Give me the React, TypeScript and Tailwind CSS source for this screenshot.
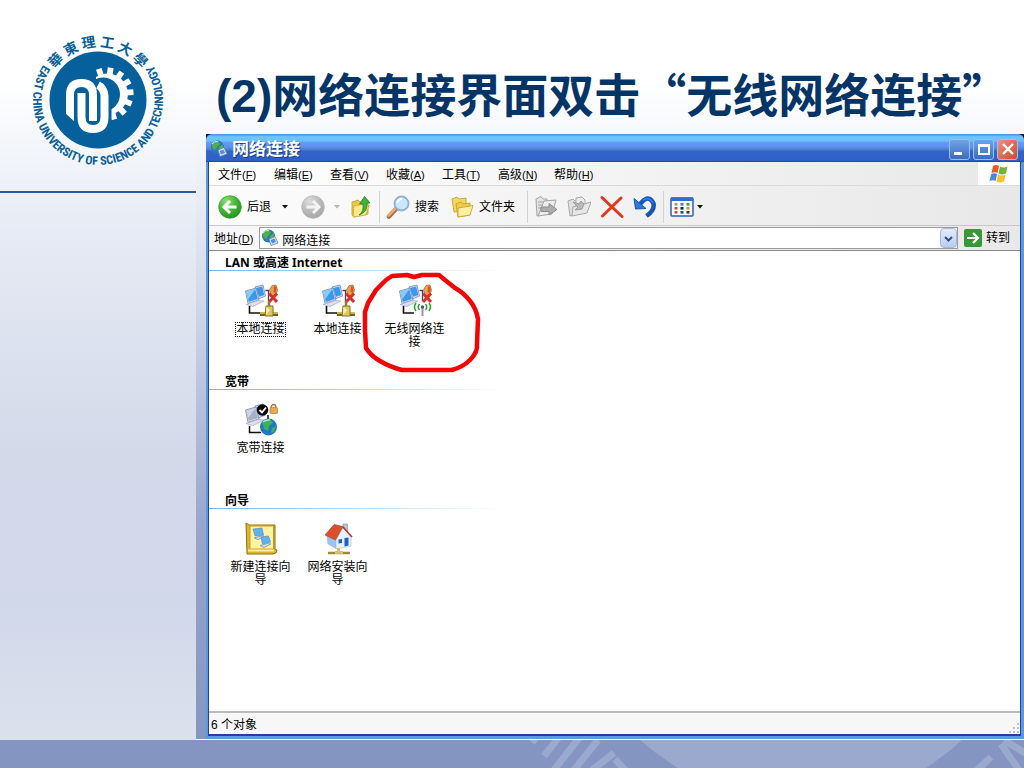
import type { ReactNode } from 'react';

const UI_FONT = "font-['Liberation_Sans','Noto_Sans_CJK_SC',sans-serif]";

function UniversityLogo() {
  const teeth = [-108, -82, -56, -30, -4, 22, 48, 74];
  return (
    <svg viewBox="0 0 160 160" className="w-40 h-40 block" role="img" aria-label="華東理工大學">
      <defs>
        <path id="ring-top" d="M 28.2 61.9 A 53 53 0 0 1 127.8 61.9" />
        <path id="ring-bottom" d="M 28.2 38.2 A 65 65 0 1 0 127.8 38.2" />
      </defs>
      <circle cx="78" cy="80" r="48.5" fill="#05609c" />
      <path d="M76 57 A 20.500 20.500 0 1 1 92 94 L 90 90 A 17 17 0 0 0 76 59 Z" fill="#fff" />
      <g stroke="#fff" fill="none">
        {teeth.map((a) => (
          <path key={a} d="M18.500 0 H26.500" strokeWidth="5.800" transform={`translate(87 74) rotate(${a})`} />
        ))}
      </g>
      <path d="M50 102 V74 Q50 63 61.500 63 Q73 63 73 74 V98 H85 V76" fill="none" stroke="#05609c" strokeWidth="13" />
      <g fill="none" stroke="#fff" strokeWidth="8">
        <path d="M50 101 V75 Q50 63 61.500 63 Q73 63 73 75 V101" />
        <path d="M61.500 73 V97 Q61.500 109 73 109 Q84.500 109 84.500 97 V76 Q84 68 78 65" />
      </g>
      <path d="M44 92 L56 103 H44 Z" fill="#05609c" />
      <g fill="#0a5f98" className="font-['Liberation_Sans_Narrow','Roboto_Condensed','Liberation_Sans','Noto_Sans_CJK_TC',sans-serif]">
        <text fontSize="14" fontWeight="700" textAnchor="middle">
          <textPath href="#ring-top" startOffset="50%">華 東 理 工 大 學</textPath>
        </text>
        <text fontSize="12" fontWeight="700" textAnchor="middle">
          <textPath href="#ring-bottom" startOffset="50%">EAST CHINA UNIVERSITY OF SCIENCE AND TECHNOLOGY</textPath>
        </text>
      </g>
    </svg>
  );
}

function GlobeIcon({ className }: { className: string }) {
  return (
    <svg viewBox="0 0 18 18" className={className} aria-hidden="true">
      <circle cx="7.500" cy="7" r="6.500" fill="#2c78c4" />
      <path d="M2 5 Q4 1 8 1 L10 4 L7 7 L5 10 Q2 9 2 5 Z M9 7 L13 4 L13 10 L10 12 Z" fill="#52b13c" />
      <path d="M2 4 Q4 1 8 1.500" stroke="#b8f0ff" fill="none" />
      <path d="M8 10 L14 7.500 L17 14 L10 16.500 Z" fill="#dce6f2" stroke="#6b8198" strokeWidth=".8" />
      <path d="M9.500 11 L13.400 9.400 L15 13 L11 14.500 Z" fill="#4d92d8" />
    </svg>
  );
}

function CircleArrow({ disabled }: { disabled?: boolean }) {
  return (
    <svg viewBox="0 0 24 24" className="w-6 h-6" aria-hidden="true">
      <defs>
        <radialGradient id={disabled ? 'arrow-off' : 'arrow-on'} cx=".35" cy=".25" r=".85">
          <stop offset="0" stopColor={disabled ? '#dedede' : '#8fe07a'} />
          <stop offset=".5" stopColor={disabled ? '#bcbcbc' : '#44b534'} />
          <stop offset="1" stopColor={disabled ? '#a2a2a2' : '#238a1c'} />
        </radialGradient>
      </defs>
      <circle cx="12" cy="12" r="11.300" fill={disabled ? 'url(#arrow-off)' : 'url(#arrow-on)'} stroke={disabled ? '#b4b4b4' : '#3a9a32'} strokeWidth=".7" />
      <path
        d={disabled ? 'M5.500 12 H17 M12 6 L18 12 L12 18' : 'M18.500 12 H7 M12 6 L6 12 L12 18'}
        fill="none"
        stroke={disabled ? '#f4f4f4' : '#fff'}
        strokeWidth="3"
      />
    </svg>
  );
}

function Caret({ color = '#111' }: { color?: string }) {
  return (
    <svg viewBox="0 0 8 8" className="w-2 h-2" aria-hidden="true">
      <path d="M1 2 H7 L4 5.500 Z" fill={color} />
    </svg>
  );
}

function UpFolderIcon() {
  return (
    <svg viewBox="0 0 24 24" className="w-6 h-6" aria-hidden="true">
      <path d="M3 7 L9 5 L11 7 L19 5 V19 L5 22 L3 20 Z" fill="#e9c843" stroke="#c39b24" strokeWidth=".8" />
      <path d="M5 11 L15 9 L20 10 L17 20 L4 22 Z" fill="#fbe98b" stroke="#cda934" strokeWidth=".8" />
      <path d="M10 20 Q15 17 14 9 H10.500 L15.500 1.500 L21 8 H18 Q19 17 10 20 Z" fill="#3fb33a" stroke="#1e8524" strokeWidth=".8" />
    </svg>
  );
}

function SearchIcon() {
  return (
    <svg viewBox="0 0 24 24" className="w-6 h-6" aria-hidden="true">
      <path d="M10 14 L3 21.500" stroke="#a2714a" strokeWidth="4.500" strokeLinecap="round" />
      <path d="M9 14 L2.500 20.500" stroke="#f0a868" strokeWidth="2.500" strokeLinecap="round" />
      <circle cx="15.500" cy="8.500" r="7" fill="#c9e8fb" stroke="#8fb0d6" strokeWidth="1.800" />
      <path d="M11 8 Q12 4 16 3.500" stroke="#fff" strokeWidth="2" fill="none" />
    </svg>
  );
}

function FoldersIcon() {
  return (
    <svg viewBox="0 0 24 24" className="w-6 h-6" aria-hidden="true">
      <g stroke="#c9a12c" strokeWidth=".9">
        <path d="M1 4 L6 2 L8 4 L15 3 V15 L3 17 Z" fill="#f3d75c" />
        <path d="M5 9 L10 7 L12 9 L19 8 V20 L7 22 Z" fill="#efcd4a" />
        <path d="M7 13 L22 10.500 L19 20 L7 22 Z" fill="#fdf0a0" />
      </g>
    </svg>
  );
}

function MoveIcon({ copy }: { copy?: boolean }) {
  return (
    <svg viewBox="0 0 24 24" className="w-6 h-6" aria-hidden="true">
      {copy ? (
        <g stroke="#a9a9a9" fill="#e0e0e0">
          <path d="M1 6 L6 4 L8 6 L10 6 V19 L3 21 Z" />
          <path d="M9 3 L15 2 L18 5 V15 L9 16 Z" fill="#ececec" />
          <path d="M6 12 L24 7 L20 18 L5 21 Z" fill="#e6e6e6" />
          <path d="M6 7 L12 9 L14 6 L17 9 L15 14 L8 15 L11 12 Z" fill="#b9b9b9" stroke="#9c9c9c" />
        </g>
      ) : (
        <g stroke="#a3a3a3" fill="#e4e4e4">
          <path d="M2 4 L7 1.500 L9 4 H13 V18 L3 21 Z" />
          <path d="M10 6 L22 5 L18 19 L4 21 Z" fill="#ededed" />
          <path d="M4 7 H9 M4 10 H9 M4 13 H7" />
          <path d="M7 12 H15 V8.500 L23 14.500 L15 20 V16.500 H7 Z" fill="#acacac" stroke="#8d8d8d" />
        </g>
      )}
    </svg>
  );
}

function DeleteIcon() {
  return (
    <svg viewBox="0 0 24 24" className="w-6 h-6" aria-hidden="true">
      <path d="M2 2.500 L22 21.500 M21 3 L2.500 21" stroke="#e1371c" strokeWidth="3" strokeLinecap="round" fill="none" />
    </svg>
  );
}

function UndoIcon() {
  return (
    <svg viewBox="0 0 24 24" className="w-6 h-6" aria-hidden="true">
      <path d="M13.500 21 Q22 15 20.500 8.500 Q17 1 11 5 L6 10" fill="none" stroke="#1656b8" strokeWidth="4.500" />
      <path d="M1 3.500 L2.500 14 L13 13.500 Z" fill="#2f78d6" stroke="#1656b8" />
      <path d="M10 5 Q17 1.500 20 8" fill="none" stroke="#3c84e0" strokeWidth="1.500" />
    </svg>
  );
}

function ViewsIcon() {
  const dots: [number, number, string][] = [
    [5, 8, '#999'], [11, 8, '#4a76d0'], [17, 8, '#35a035'],
    [5, 12, '#d64a30'], [11, 12, '#222'], [17, 12, '#e09a1c'],
    [5, 16, '#d64a30'], [11, 16, '#174ba8'], [17, 16, '#333'],
  ];
  return (
    <svg viewBox="0 0 24 24" className="w-6 h-6" aria-hidden="true">
      <rect x="1" y="3" width="22" height="18" rx="1" fill="#fff" stroke="#2a5fb0" strokeWidth="1.500" />
      <rect x="1" y="2.500" width="22" height="3.500" fill="#2f6fd0" />
      {dots.map(([x, y, c]) => (
        <rect key={`${x}-${y}`} x={x - 0.5} y={y} width="3" height="2.600" fill={c} />
      ))}
    </svg>
  );
}

function WindowsFlag() {
  return (
    <svg viewBox="0 0 20 20" className="w-5 h-5" aria-hidden="true">
      <path d="M4 2 Q7 0 10 2 L8.500 9 Q6 7.500 2.500 9 Z" fill="#ea5b2c" />
      <path d="M11 2.500 Q14 4.500 18.500 2.500 L17 9.500 Q13 11.500 9.500 9.500 Z" fill="#6fb43c" />
      <path d="M2.200 10 Q5.500 8.500 8.200 10 L6.500 17 Q4 15.500 .5 17 Z" fill="#4a86dc" />
      <path d="M9.200 10.500 Q13 12.500 16.700 10.500 L15 17.500 Q11 19.500 7.500 17.500 Z" fill="#f5c02e" />
    </svg>
  );
}

function Monitors({ gray }: { gray?: boolean }) {
  const screen = gray ? '#a9b0c6' : '#3a98ee';
  const light = gray ? '#ced2e4' : '#86cdfb';
  return (
    <g>
      <path d="M11 3 L19 1 L21.500 12 L14 15 Z" fill="#d5e0f2" stroke="#6f87ae" strokeWidth=".8" />
      <path d="M12 4 L18.200 2.400 L20.300 11 L15 12.800 Z" fill={screen} />
      <path d="M1.500 7 L12 4 L15 16 L4 19.500 Z" fill="#d5e0f2" stroke="#6f87ae" strokeWidth=".8" />
      <path d="M2.600 7.800 L11.300 5.300 L13.800 15 L4.700 17.900 Z" fill={screen} />
      <path d="M2.600 7.800 L11.300 5.300 L4.300 15 Z" fill={light} />
      <path d="M2 20.500 L14 16.500 L20 17 L9 22.500 Z" fill="#dfdff0" stroke="#a3a8c2" strokeWidth=".7" />
    </g>
  );
}

function PlugWithCross() {
  return (
    <g>
      <path d="M21.500 6.500 H24.500 V17" stroke="#4b3f6e" strokeWidth="1.300" fill="none" />
      <path d="M25.500 6 L28 1.500 L32 1 L33.500 6 L32 11 L27 12 Z" fill="#e9a254" stroke="#a9601c" strokeWidth=".7" />
      <path d="M30 2 L32.500 3 L32 9 L29.500 8 Z" fill="#d2562c" />
      <path d="M25 9.500 L33 18 M33 9.500 L25 18" stroke="#d8302a" strokeWidth="3" />
    </g>
  );
}

function LanIcon() {
  return (
    <svg viewBox="0 0 34 34" className="w-[34px] h-[34px]" aria-hidden="true">
      <Monitors />
      <PlugWithCross />
      <path d="M5.500 22 V29 H18" stroke="#111" strokeWidth="1.600" fill="none" />
      <path d="M16 30 H34" stroke="#6d6226" strokeWidth="4" />
      <path d="M16 29 H34" stroke="#d9c050" strokeWidth="1.800" />
      <path d="M22 22 H29 V32 H21 Z" fill="#dfc95e" stroke="#80702a" />
      <path d="M22.500 23 L26 26 L22 31 Z" fill="#faf0b4" />
      <path d="M25 17 V22" stroke="#8a7a35" strokeWidth="2.500" />
    </svg>
  );
}

function WirelessIcon() {
  return (
    <svg viewBox="0 0 34 34" className="w-[34px] h-[34px]" aria-hidden="true">
      <Monitors />
      <PlugWithCross />
      <path d="M5.500 22 V29 H16" stroke="#111" strokeWidth="1.600" fill="none" />
      <path d="M24.500 23 V32" stroke="#a58cc0" strokeWidth="2" />
      <circle cx="24.500" cy="23" r="1.700" fill="#5c4b82" />
      <path d="M21.500 20 Q19 23 21.500 26 M18 19 Q15 23 18 27 M27.500 20 Q30 23 27.500 26 M31 19 Q34 23 31 27" stroke="#29a32b" strokeWidth="1.500" fill="none" />
    </svg>
  );
}

function BroadbandIcon() {
  return (
    <svg viewBox="0 0 34 34" className="w-[34px] h-[34px]" aria-hidden="true">
      <Monitors gray />
      <path d="M5.500 23 V29.500 H17 M24 12 V17" stroke="#111" strokeWidth="1.500" fill="none" />
      <path d="M27 5 Q27 1.500 30 1.500 Q32 1.500 32 5" stroke="#9c7548" fill="none" strokeWidth="1.300" />
      <rect x="26" y="4.500" width="7.500" height="6" rx="1" fill="#e7a850" stroke="#b67a32" strokeWidth=".7" />
      <circle cx="18.500" cy="7" r="5.800" fill="#0b0b0b" />
      <path d="M15.500 7 L18 9.500 L22 4.500" stroke="#fff" strokeWidth="1.800" fill="none" />
      <circle cx="24.500" cy="24" r="8.500" fill="#1e78c4" />
      <path d="M18 19 Q22 15 27 17 L29 20 L25 23 L24 28 L20 26 Z M28 25 L32 23 L30 29 L27 30 Z" fill="#3fb055" />
      <path d="M19 19 Q22 16.500 26 17" stroke="#a5e8ef" strokeWidth="1.500" fill="none" />
    </svg>
  );
}

function NewConnectionIcon() {
  return (
    <svg viewBox="0 0 34 34" className="w-[34px] h-[34px]" aria-hidden="true">
      <path d="M2 1 L5 3 H31 V27 L33 28 Q33 32 29 32 H3 Z" fill="#dbb52c" stroke="#8e6f16" />
      <path d="M6 4 H29.500 V27 H6 Z" fill="#fff3a4" stroke="#c69d20" />
      <path d="M4 28.500 H30" stroke="#fff0a0" strokeWidth="2" />
      <g stroke="#6b87b8" strokeWidth=".7">
        <path d="M9 7 L18 6 L19.500 13 L11 14 Z" fill="#57b4f5" />
        <path d="M10 16 L19 13.500 L21 15 L14 17.500 Z" fill="#d3dcef" />
        <path d="M17 15 L24.500 14 L26.500 20 L18.500 22 Z" fill="#57b4f5" />
        <path d="M16 23.500 L25 21 L27 22 L20 25.500 Z" fill="#d3dcef" />
      </g>
    </svg>
  );
}

function HomeNetworkIcon() {
  return (
    <svg viewBox="0 0 34 34" className="w-[34px] h-[34px]" aria-hidden="true">
      <path d="M22 2 H26.500 V10 H22 Z" fill="#b8c2d4" stroke="#8590a8" strokeWidth=".6" />
      <path d="M5.500 12 L15 17 V27 L6.500 22 Z" fill="#9cc2f0" />
      <path d="M15 17 L22 6 L30 15 V24 L15 27 Z" fill="#e9f1ff" stroke="#a7b7d4" strokeWidth=".6" />
      <path d="M13 2.500 L22 4.500 L14.500 18 L4 13 Z" fill="#d9502c" stroke="#a83a1c" strokeWidth=".6" />
      <path d="M22 5 L31 15" stroke="#b03a20" strokeWidth="1.500" />
      <path d="M17.500 17.500 L21 17 V21 L17.500 21.500 Z M23.500 16 L27.500 15.500 V23.500 L23.500 24.500 Z" fill="#1c62c0" />
      <path d="M7 31 H29" stroke="#a08a35" strokeWidth="2.500" />
      <path d="M17.500 26 V30 M14 30.500 H22" stroke="#d8c25e" strokeWidth="3" />
    </svg>
  );
}

function HandDrawnCircle() {
  return (
    <svg viewBox="0 0 120 104" className="absolute -left-3.5 -top-3.5 w-[120px] h-[104px] pointer-events-none" aria-hidden="true">
      <path
        d="M52 7 L45 5 L30 6 L24 10 L14 20 L6 33 L3 42 L3 60 L4 78 Q9 86 18 91 Q28 97 40 100 H90 Q101 97 108 90 Q116 82 115 74 L116 49 Q114 38 108 31 Q102 23 93 18 L83 10 L77 5 L60 5 Z"
        fill="none"
        stroke="#f30505"
        strokeWidth="4.500"
        strokeLinejoin="round"
      />
    </svg>
  );
}

type Item = { id: string; label: string; icon: ReactNode; focused?: boolean; circled?: boolean };

const groups: { title: string; items: Item[] }[] = [
  {
    title: 'LAN 或高速 Internet',
    items: [
      { id: 'lan1', label: '本地连接', icon: <LanIcon />, focused: true },
      { id: 'lan2', label: '本地连接', icon: <LanIcon /> },
      { id: 'wlan', label: '无线网络连接', icon: <WirelessIcon />, circled: true },
    ],
  },
  { title: '宽带', items: [{ id: 'bb', label: '宽带连接', icon: <BroadbandIcon /> }] },
  {
    title: '向导',
    items: [
      { id: 'new', label: '新建连接向导', icon: <NewConnectionIcon /> },
      { id: 'home', label: '网络安装向导', icon: <HomeNetworkIcon /> },
    ],
  },
];

const menus = [
  ['文件', 'F'], ['编辑', 'E'], ['查看', 'V'], ['收藏', 'A'], ['工具', 'T'], ['高级', 'N'], ['帮助', 'H'],
];

function Separator() {
  return <div className="w-px h-8 bg-[#d2d2d2] mx-1.5" />;
}

function TitleBar() {
  const button = 'w-[21px] h-[21px] rounded-[3px] border border-[#9cc0ee] flex items-center justify-center';
  return (
    <header className="h-7 flex items-center pl-1 pr-1.5 pt-0.5 gap-1 rounded-t-md bg-[linear-gradient(180deg,#4b8ad8_0%,#6cc6fc_10%,#6cc0fb_24%,#6496fa_32%,#6090f2_46%,#4c84d0_54%,#3464c8_62%,#3060c8_94%,#2040a4_100%)]">
      <GlobeIcon className="w-[18px] h-[18px]" />
      <h2 className="pt-0.5 text-[17px] leading-5 font-bold text-white [text-shadow:1px_1px_0_#1b3c86]">网络连接</h2>
      <div className="ml-auto flex gap-[3px]">
        <button type="button" aria-label="最小化" className={`${button} bg-linear-to-b from-[#6fa4e6] to-[#3c6cc0]`}>
          <span className="w-2 h-[3px] bg-white mt-2 mr-1" />
        </button>
        <button type="button" aria-label="最大化" className={`${button} bg-linear-to-b from-[#6fa4e6] to-[#3c6cc0]`}>
          <span className="w-3 h-[11px] border-2 border-t-3 border-white" />
        </button>
        <button type="button" aria-label="关闭" className={`${button} bg-linear-to-br from-[#f0907c] to-[#cf4630]`}>
          <svg viewBox="0 0 12 12" className="w-3 h-3" aria-hidden="true">
            <path d="M1 1 L11 11 M11 1 L1 11" stroke="#fff" strokeWidth="2.400" />
          </svg>
        </button>
      </div>
    </header>
  );
}

function ToolBar() {
  return (
    <div className="h-10 flex items-center pl-[9px] pt-0.5 border-b border-[#c9c9c9] bg-linear-to-r from-[#fcfcfc] to-[#e8e8e8]">
      <button type="button" className="flex items-center gap-[5px]"><CircleArrow />后退</button>
      <button type="button" aria-label="后退列表" className="ml-2.5"><Caret /></button>
      <button type="button" aria-label="前进" className="ml-3"><CircleArrow disabled /></button>
      <button type="button" aria-label="前进列表" className="ml-2"><Caret color="#b5b5b5" /></button>
      <button type="button" aria-label="向上" className="ml-2"><UpFolderIcon /></button>
      <Separator />
      <button type="button" className="flex items-center gap-[5px]"><SearchIcon />搜索</button>
      <button type="button" className="flex items-center gap-1 ml-3"><FoldersIcon />文件夹</button>
      <div className="ml-1.5"><Separator /></div>
      <div className="flex gap-[9px]">
        <button type="button" aria-label="移至"><MoveIcon /></button>
        <button type="button" aria-label="复制到"><MoveIcon copy /></button>
        <button type="button" aria-label="删除"><DeleteIcon /></button>
        <button type="button" aria-label="撤消"><UndoIcon /></button>
      </div>
      <Separator />
      <button type="button" aria-label="查看方式" className="flex items-center gap-0.5"><ViewsIcon /><Caret /></button>
    </div>
  );
}

function AddressBar() {
  return (
    <div className="h-6 flex items-center pl-[5px] pr-2.5 bg-linear-to-r from-[#f8f8f8] to-[#e9e9e9]">
      <label htmlFor="address" className="mr-1.5 pt-0.5 whitespace-nowrap">地址<span className="text-[11px]">(<u>D</u>)</span></label>
      <div className="flex-1 h-[22px] flex items-center bg-white border border-[#9a9a9a] pl-px">
        <GlobeIcon className="w-[18px] h-[18px]" />
        <input id="address" defaultValue="网络连接" className="flex-1 min-w-0 h-[18px] pt-0.5 ml-[3px] bg-transparent outline-none" />
        <button type="button" aria-label="展开地址列表" className="w-[17px] h-5 rounded-sm border border-[#a9b9dd] bg-linear-to-b from-[#e4ecff] to-[#b9cbf3] flex items-center justify-center">
          <svg viewBox="0 0 9 9" className="w-[9px] h-[9px]" aria-hidden="true">
            <path d="M1 3 L4.500 6.500 L8 3" fill="none" stroke="#3a4f80" strokeWidth="2" />
          </svg>
        </button>
      </div>
      <button type="button" className="flex items-center gap-1 ml-1.5 whitespace-nowrap">
        <svg viewBox="0 0 18 18" className="w-[18px] h-[18px]" aria-hidden="true">
          <rect width="18" height="18" rx="2" fill="#37983a" />
          <path d="M3 9 H14 M9 4 L14 9 L9 14" fill="none" stroke="#fff" strokeWidth="2.200" />
        </svg>
        转到
      </button>
    </div>
  );
}

function ExplorerWindow() {
  return (
    <section className={`flex-1 min-w-0 flex flex-col bg-[linear-gradient(180deg,#101828_0,#101828_12px,#6fa6e4_12px)] text-xs leading-4 text-black ${UI_FONT}`}>
      <TitleBar />
      <div className="flex-1 flex flex-col border-l-2 border-r-3 border-b-3 border-[#5a9ae0]">
        <div className="flex-1 flex flex-col border-x border-b-2 border-[#26409a] bg-white">
          <nav className="h-6 flex items-stretch border-b border-[#dcdcdc] bg-linear-to-r from-white to-[#e8e8e8]">
            <div className="flex flex-1 pl-[9px] pt-0.5">
              {menus.map(([name, key]) => (
                <button key={key} type="button" className="w-14 text-left whitespace-nowrap">
                  {name}<span className="text-[11px]">(<u>{key}</u>)</span>
                </button>
              ))}
            </div>
            <div className="w-[42px] bg-white flex items-center justify-center"><WindowsFlag /></div>
          </nav>
          <ToolBar />
          <AddressBar />
          <main className="flex-1 border-t border-[#8a8a8a]">
            {groups.map((group) => (
              <section key={group.title} className="h-[119px]">
                <h3 className="h-[19px] pl-4 pt-1 font-bold text-xs leading-4 font-['Noto_Sans','Noto_Sans_CJK_SC',sans-serif]">{group.title}</h3>
                <div className="h-px w-[296px] bg-linear-to-r from-[#70b8ea] to-white" />
                <ul className="flex pl-[13px] pt-[13px]">
                  {group.items.map((item) => (
                    <li key={item.id} className="w-[77px] relative flex flex-col items-center">
                      {item.icon}
                      <span
                        className={`mt-[5px] max-w-16 text-center leading-[13px] ${item.focused ? 'outline outline-dotted outline-1 outline-black' : ''}`}
                      >
                        {item.label}
                      </span>
                      {item.circled && (
                        <HandDrawnCircle />
                      )}
                    </li>
                  ))}
                </ul>
              </section>
            ))}
          </main>
          <footer className="h-[23px] flex items-center justify-between pl-0.5 pt-0.5 border-t-2 border-[#bcbcbc] bg-[#f7f7f7]">
            <span>6 个对象</span>
            <svg viewBox="0 0 12 12" className="w-3 h-3 self-end" aria-hidden="true">
              <path d="M9 1 h2 v2 h-2 Z M9 5 h2 v2 h-2 Z M5 5 h2 v2 h-2 Z M9 9 h2 v2 h-2 Z M5 9 h2 v2 h-2 Z M1 9 h2 v2 h-2 Z" fill="#c3c3cc" />
            </svg>
          </footer>
        </div>
      </div>
    </section>
  );
}

export default function App() {
  return (
    <div className="min-h-screen flex flex-col bg-white">
      <div className="flex-1 flex bg-[linear-gradient(180deg,#ffffff_0%,#ffffff_11%,#f3f6fa_20%,#e6eaf4_32%,#d3d9e9_62%,#d1d8ea_82%,#dbe1ec_100%)]">
        <aside className="w-[196px] shrink-0">
          <div className="h-[193px] pl-5 pt-5 border-b-2 border-[#2b5a9c]">
            <UniversityLogo />
          </div>
        </aside>
        <div className="flex-1 min-w-0 flex flex-col">
          <h1 className="h-[134px] pl-5 pt-[62px] text-[46px] leading-[60px] font-bold text-[#053566] whitespace-nowrap font-['Liberation_Sans','Noto_Sans_CJK_SC',sans-serif]">
            (2)<span lang="zh-CN" className="font-['Noto_Sans_CJK_SC',sans-serif]">网络连接界面双击“无线网络连接”</span>
          </h1>
          <div className="flex-1 flex pl-2.5 border-b border-white bg-[linear-gradient(180deg,#f6f8fb_0%,#d5dbeb_25%,#98a5cc_65%,#8496c2_100%)]">
            <ExplorerWindow />
          </div>
        </div>
      </div>
      <div className="h-7 flex justify-end overflow-hidden bg-[#8595c2]">
        <svg viewBox="0 0 524 28" className="w-[524px] h-7 block" aria-hidden="true">
          <path d="M140 0 H462 Q446 15 426 28 H178 Q157 15 140 0 Z" fill="#9ba9cf" />
          <g stroke="#9ba9cf" strokeWidth="7" fill="none">
            <path d="M32 -2 L37 2 M60 -4 L44 16 M79 -2 L54 30 M98 0 L74 30 M114 13 L92 30 M115 19 L125 30" />
            <path d="M491 17 L477 30 M501 4 L519 30 M504 0 L530 16" />
          </g>
        </svg>
      </div>
    </div>
  );
}
